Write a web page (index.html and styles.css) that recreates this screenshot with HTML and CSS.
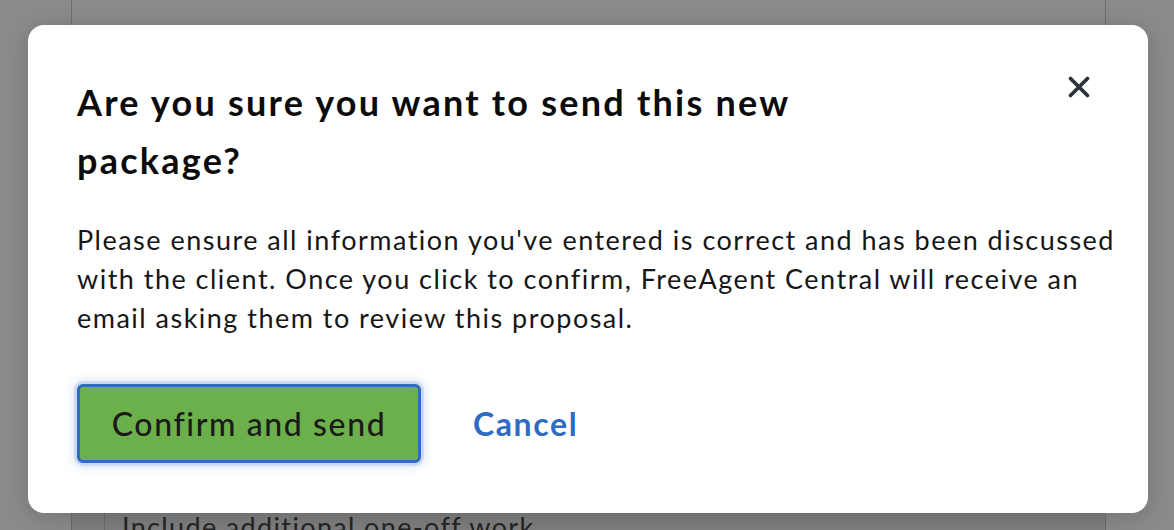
FILE: index.html
```html
<!DOCTYPE html>
<html lang="en">
<head>
<meta charset="utf-8">
<title>Send package</title>
<link rel="stylesheet" href="styles.css">
</head>
<body>
<div class="page">
  <div class="page-panel">
    <div class="page-spacer"></div>
    <div class="option-row">
      <span class="option-box"></span>
      <span class="option-label">Include additional one-off work</span>
    </div>
  </div>
</div>

<div class="modal" role="dialog" aria-modal="true" aria-labelledby="modal-title">
  <button class="modal-close" type="button" aria-label="Close">
    <svg viewBox="0 0 24 24" width="24" height="24" aria-hidden="true">
      <path d="M3.5 3.5 L20.5 20.5 M20.5 3.5 L3.5 20.5" fill="none" stroke="#2b343c" stroke-width="3.8" stroke-linecap="round"/>
    </svg>
  </button>
  <h2 class="modal-title" id="modal-title">Are you sure you want to send this new package?</h2>
  <p class="modal-text">Please ensure all information you've entered is correct and has been discussed with the client. Once you click to confirm, FreeAgent Central will receive an email asking them to review this proposal.</p>
  <div class="modal-actions">
    <button class="btn-confirm" type="button">Confirm and send</button>
    <a class="btn-cancel" href="#">Cancel</a>
  </div>
</div>
</body>
</html>
```

FILE: styles.css
```css
* {
  box-sizing: border-box;
}

html,
body {
  margin: 0;
  height: 530px;
  overflow: hidden;
}

body {
  background: #8a8b8a;
  font-family: "Lato", "Liberation Sans", sans-serif;
  position: relative;
}

.page {
  height: 530px;
  padding-left: 71px;
  width: 1106px;
}

.page-panel {
  height: 100%;
  border-left: 1px solid #6f706f;
  border-right: 1px solid #6f706f;
  display: flex;
  flex-direction: column;
}

.page-spacer {
  height: 509px;
  flex: none;
}

.option-row {
  display: flex;
  align-items: flex-start;
  background: #7e7f7e;
  height: 40px;
  margin-left: -1px;
}

.option-box {
  width: 34px;
  height: 40px;
  border-left: 1px solid #6a6b6a;
  border-right: 1px solid #6a6b6a;
  flex: none;
}

.option-label {
  margin-left: 17px;
  margin-top: 1px;
  font-size: 27px;
  letter-spacing: 0.05em;
  color: #242524;
}

.modal {
  position: absolute;
  left: 28px;
  top: 25px;
  width: 1120px;
  height: 488px;
  background: #ffffff;
  border-radius: 16px;
  box-shadow: 0 4px 28px rgba(0, 0, 0, 0.18);
  padding: 48px 20px 0 49px;
}

.modal-close {
  position: absolute;
  top: 50px;
  right: 57px;
  width: 24px;
  height: 24px;
  padding: 0;
  border: 0;
  background: none;
  cursor: pointer;
  display: flex;
}

.modal-close svg {
  width: 24px;
  height: 24px;
}

.modal-title {
  margin: 0;
  max-width: 820px;
  font-size: 36px;
  line-height: 58px;
  font-weight: 700;
  letter-spacing: 0.062em;
  color: #0b0b0b;
}

.modal-text {
  margin: 31px 0 0;
  font-size: 27px;
  line-height: 39px;
  letter-spacing: 0.055em;
  color: #161616;
}

.modal-actions {
  display: flex;
  align-items: center;
  gap: 52px;
  margin-top: 47px;
}

.btn-confirm {
  width: 344px;
  height: 79px;
  border: 3px solid #2f6bc1;
  border-radius: 6px;
  background: #6cb04b;
  color: #1a1a1a;
  font-family: inherit;
  font-size: 32px;
  font-weight: 500;
  letter-spacing: 0.05em;
  box-shadow: 0 0 0 3px rgba(47, 107, 193, 0.14), 0 0 10px 4px rgba(47, 107, 193, 0.18);
  cursor: pointer;
}

.btn-cancel {
  color: #2e6bc2;
  font-size: 32px;
  font-weight: 700;
  letter-spacing: 0.05em;
  text-decoration: none;
}
```
